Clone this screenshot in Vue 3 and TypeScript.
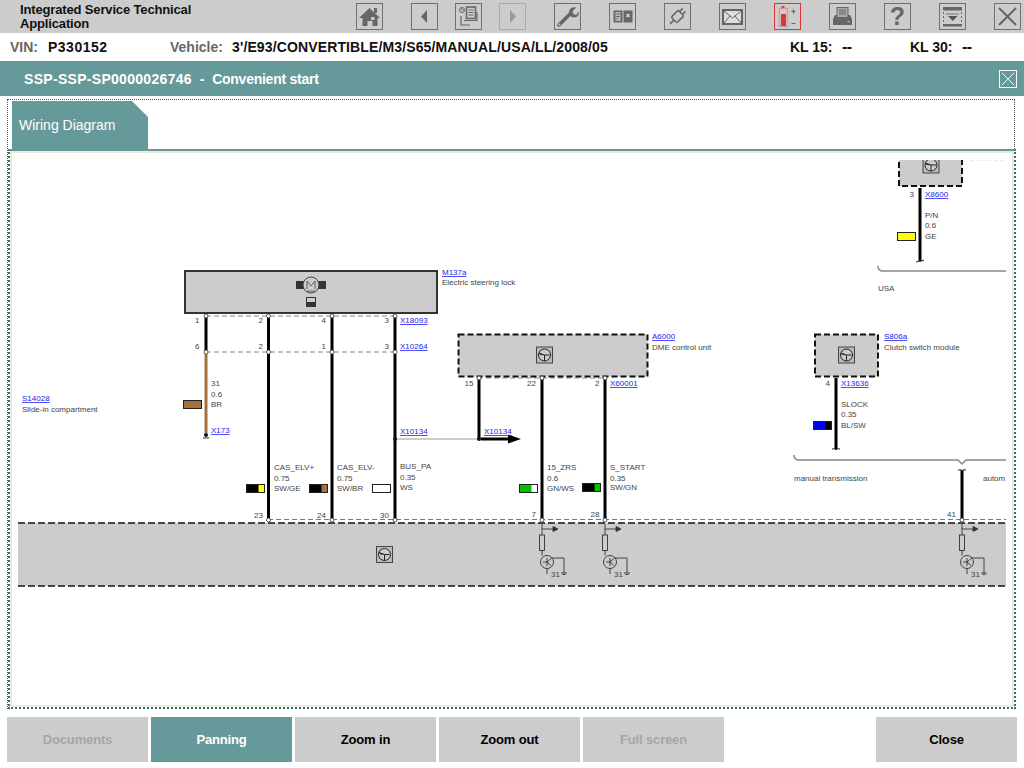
<template>
  <div class="page">
    <header class="toolbar">
      <div class="app-title">Integrated Service Technical<br />Application</div>
      <nav class="tools">
        <button class="tool">
          <svg viewBox="0 0 25 25"><path d="M12.5 4 23 14h-2.500v8h-5v-5h-5v5h-5v-8H2z" fill="#666" /><rect x="14" y="13" width="3.500" height="3" fill="#ccc" /><rect x="17" y="4" width="3" height="5" fill="#666" /></svg>
        </button>
        <button class="tool">
          <svg viewBox="0 0 25 25"><path d="M15 6 9 12.500l6 6.500z" fill="#666" /></svg>
        </button>
        <button class="tool tool-near">
          <svg viewBox="0 0 25 25" fill="none" stroke="#666"><circle cx="6" cy="6" r="2.500" /><path d="M5 3.500 6 6h2" stroke-width=".8" /><rect x="10.500" y="3" width="9" height="11.500" stroke-width="1.600" /><path d="M12.500 6h5M12.500 8.500h5M12.500 11h5" /><path d="M21 8v8.500H8M5 12v9h9" stroke-width="1.200" /></svg>
        </button>
        <button class="tool tool-near tool-off">
          <svg viewBox="0 0 25 25"><path d="M10 6l6 6.500L10 19z" fill="#999" /></svg>
        </button>
        <button class="tool">
          <svg viewBox="0 0 25 25"><path d="M4 21 15 10" stroke="#666" stroke-width="3.500" stroke-linecap="round" /><path d="M21 3.500 17.500 7.500l1 2.500 2.500 1 3-3.500c.5 3-1.500 6-5 6-1 0-2-.3-3-1L14 10c-.5-3 1-7.500 7-6.500z" fill="#666" /><circle cx="4.500" cy="20.500" r=".9" fill="#ccc" /></svg>
        </button>
        <button class="tool">
          <svg viewBox="0 0 25 25"><rect x="3.500" y="6.500" width="9" height="12" fill="#666" /><rect x="5.500" y="8" width="5" height="9" fill="#bbb" /><path d="M6.500 10h3M6.500 12.500h3M6.500 15h1.500" stroke="#555" /><rect x="13.500" y="6.500" width="9" height="12" fill="#666" /><path d="m16.500 10 3 3m0-3-3 3" stroke="#ddd" stroke-width="1.200" /></svg>
        </button>
        <button class="tool">
          <svg viewBox="0 0 25 25"><g transform="rotate(45 12.500 12.500)" fill="none" stroke="#666" stroke-width="1.600"><rect x="8.500" y="7.500" width="8" height="10" rx="1.500" /><path d="M10.500 7V3M14.500 7V3M12.500 18v5" /></g></svg>
        </button>
        <button class="tool">
          <svg viewBox="0 0 25 25" fill="none" stroke="#666"><rect x="3" y="6" width="19" height="14" stroke-width="2" fill="#ddd" /><path d="m4 7 8.500 7L21 7M4 19l6-7M21 19l-6-7" /></svg>
        </button>
        <button class="tool tool-red">
          <svg viewBox="0 0 25 25"><rect x="6.500" y="2" width="3" height="3" fill="#d33" /><rect x="4.500" y="4.500" width="8" height="18" fill="none" stroke="#d99" stroke-width="1.400" /><rect x="6" y="10" width="5" height="12" fill="#d33" /><path d="M16.500 7.500h4M18.500 5.500v4M16.500 19.500h4" stroke="#d33" stroke-width="1.200" /></svg>
        </button>
        <button class="tool">
          <svg viewBox="0 0 25 25"><rect x="7" y="3.500" width="11" height="10" fill="#aaa" stroke="#666" /><path d="M9 6h7M9 8h7M9 10h7" stroke="#666" /><path d="M7 11H5l-2 4v6h19v-6l-2-4h-2v3H7z" fill="#666" /><rect x="17.500" y="17" width="2" height="1" fill="#ccc" /></svg>
        </button>
        <button class="tool">
          <span class="help-mark">?</span>
        </button>
        <button class="tool">
          <svg viewBox="0 0 25 25"><rect x="3" y="3" width="19" height="3.500" fill="#666" /><rect x="3" y="20" width="19" height="2.500" fill="#666" /><path d="M8 12h9.500l-4.700 5z" fill="#555" /><path d="M3.500 8v11M21.500 8v11" stroke="#666" stroke-dasharray="2 2" /><path d="M6 10h13" stroke="#777" /></svg>
        </button>
        <button class="tool">
          <svg viewBox="0 0 25 25"><path d="m4 4 17 17M21 4 4 21" stroke="#666" stroke-width="2" /></svg>
        </button>
      </nav>
    </header>

    <section class="vehicle-row">
      <span class="cap vin-cap">VIN:</span>
      <span class="vin">P330152</span>
      <span class="cap vehicle-cap">Vehicle:</span>
      <span class="vehicle">3'/E93/CONVERTIBLE/M3/S65/MANUAL/USA/LL/2008/05</span>
      <span class="kl"><span>KL 15:</span><span class="kl-value">--</span></span>
      <span class="kl kl-last"><span>KL 30:</span><span class="kl-value">--</span></span>
    </section>

    <section class="doc-title">
      <span><span class="doc-code">SSP-SSP-SP0000026746</span>&nbsp; -&nbsp; <span class="doc-name">Convenient start</span></span>
      <button class="doc-close">
        <svg viewBox="0 0 16 16"><path d="m2 2 12 12M14 2 2 14" stroke="#fff" stroke-width=".9" /></svg>
      </button>
    </section>

    <main class="panel">
      <div class="tab">Wiring Diagram</div>
      <div class="frame">
        <svg class="diagram" viewBox="10 151 1004 556" width="1004" height="556">
          <defs>
            <clipPath id="sheet"><rect x="18" y="160" width="988" height="440" /></clipPath>
            <g id="ecu">
              <rect x="-8" y="-8" width="16" height="16" fill="#bbb" stroke="#444" />
              <circle r="6" fill="#ccc" stroke="#222" />
              <path d="M0 0v6M0 0-5.500-2M0 0l5 0M-5 -1l3 1" fill="none" stroke="#222" />
            </g>
            <g id="driver" fill="none" stroke="#333" stroke-width=".9">
              <path d="M0 2v13M0 7h12" />
              <path d="M11 4.500 16 7l-5 2.500z" fill="#333" />
              <rect x="-2.500" y="13" width="5" height="15.500" fill="#ccc" />
              <path d="M0 28.500v5" />
              <circle cx="5" cy="40" r="6.500" />
              <path d="M5 36v8M1 40h4l4-3.500M5 40l4 3.500M9 36h13v15M5 46v6M19 51h6M20.500 52.500h3" />
            </g>
          </defs>

          <g clip-path="url(#sheet)">
            <rect x="18" y="523" width="988" height="63" fill="#ccc" />
            <path d="M18 523h988M18 586h988" stroke="#111" stroke-width="1.600" stroke-dasharray="7 3" />
            <path d="M268 519.500h738" stroke="#777" stroke-dasharray="5 3" />
            <use href="#ecu" x="384.500" y="554.500" />

            <rect x="185" y="271" width="252" height="42" fill="#ccc" stroke="#333" stroke-width="2" />
            <rect x="296" y="281" width="30" height="8" fill="#333" />
            <circle cx="311" cy="285" r="8" fill="#ccc" stroke="#444" />
            <path d="M307 289v-8l4 5 4-5v8M307 291h8" fill="none" stroke="#444" stroke-width=".8" />
            <rect x="306" y="297" width="10" height="10" fill="#333" />
            <rect x="307" y="298" width="8" height="4" fill="#ccc" />

            <path d="M206 316h189M206 352h189M478 378h127" stroke="#888" stroke-dasharray="5 3" />

            <rect x="458.500" y="334.500" width="189" height="42" fill="#ccc" stroke="#111" stroke-width="2" stroke-dasharray="6 3" />
            <use href="#ecu" x="544.500" y="355" />
            <rect x="815" y="334.500" width="63" height="42" fill="#ccc" stroke="#111" stroke-width="2" stroke-dasharray="6 3" />
            <use href="#ecu" x="846.500" y="355" />
            <rect x="899" y="150" width="63" height="36" fill="#ccc" stroke="#111" stroke-width="2" stroke-dasharray="6 3" />
            <use href="#ecu" x="931" y="165" />
            <path d="M970 160h36" stroke="#ddd" stroke-dasharray="4 2" />

            <path d="M395 439h84" stroke="#999" stroke-width="1.200" />
            <path d="M481 439h29" stroke="#000" stroke-width="3" />
            <path d="M508 434.500 521 439l-13 4.500z" fill="#000" />

            <line
              v-for="wire in wires"
              :key="wire.x + '-' + wire.from"
              :x1="wire.x"
              :x2="wire.x"
              :y1="wire.from"
              :y2="wire.to"
              :stroke="wire.color ?? '#000'"
              stroke-width="3"
            />
            <circle
              v-for="pin in pins"
              :key="pin[0] + '-' + pin[1]"
              :cx="pin[0]"
              :cy="pin[1]"
              r="2"
              fill="#fff"
              stroke="#333"
              stroke-width=".8"
            />
            <circle cx="206" cy="435" r="2" fill="#111" />
            <circle cx="395" cy="439" r="2" fill="#111" />
            <circle cx="479" cy="439" r="2" fill="#111" />
            <path d="M203 438h6" stroke="#333" />

            <path d="M832 449q4-1 4 1 0-2 4-1M958 470q4-1 4 1 0-2 4-1M916 262q4-1 4-1 0 1 4-1" fill="none" stroke="#222" />
            <path d="M794 455q0 5 5 5h159l4 4 4-4h40M878 266q0 5 5 5h123" fill="none" stroke="#888" stroke-width="1.500" />

            <use href="#driver" x="542" y="522" />
            <use href="#driver" x="605" y="522" />
            <use href="#driver" x="962" y="522" />

            <g v-for="swatch in swatches" :key="swatch.x">
              <rect :x="swatch.x + 0.500" :y="swatch.y + 0.500" width="18" height="8" :fill="swatch.left" stroke="#222" />
              <rect v-if="swatch.right" :x="swatch.x + 12.500" :y="swatch.y + 1" width="5.500" height="7" :fill="swatch.right" />
            </g>

            <text
              v-for="label in labels"
              :key="label[0] + label[2] + label[1]"
              class="lbl"
              :x="label[0]"
              :y="label[1]"
              :text-anchor="label[3] ?? 'start'"
            >{{ label[2] }}</text>
            <text
              v-for="link in links"
              :key="link[0] + link[2]"
              class="lnk"
              :x="link[0]"
              :y="link[1]"
            >{{ link[2] }}</text>
          </g>
        </svg>
      </div>
    </main>

    <footer class="actions">
      <button class="action action-off">Documents</button>
      <button class="action action-on">Panning</button>
      <button class="action">Zoom in</button>
      <button class="action">Zoom out</button>
      <button class="action action-off">Full screen</button>
      <button class="action action-end">Close</button>
    </footer>
  </div>
</template>

<script setup lang="ts">
type Wire = { x: number; from: number; to: number; color?: string }
type Label = [number, number, string, string?]
type Link = [number, number, string]
type Swatch = { x: number; y: number; left: string; right?: string }

const wires: Wire[] = [
  { x: 206, from: 316, to: 352 },
  { x: 268.500, from: 316, to: 352 },
  { x: 332, from: 316, to: 352 },
  { x: 395, from: 316, to: 352 },
  { x: 206, from: 354, to: 433, color: '#a5703c' },
  { x: 268.500, from: 354, to: 520 },
  { x: 332, from: 354, to: 520 },
  { x: 395, from: 354, to: 520 },
  { x: 479, from: 378, to: 439 },
  { x: 542, from: 378, to: 520 },
  { x: 605, from: 378, to: 520 },
  { x: 836, from: 378, to: 449 },
  { x: 962, from: 470, to: 520 },
  { x: 920, from: 188, to: 261 },
]

const pins: [number, number][] = [
  [206, 316], [268.500, 316], [332, 316], [395, 316],
  [206, 352], [268.500, 352], [332, 352], [395, 352],
  [268.500, 520], [332, 520], [395, 520],
  [479, 378], [542, 378], [605, 378],
  [542, 520], [605, 520], [962, 520],
]

const labels: Label[] = [
  [442, 285, 'Electric steering lock'],
  [22, 412, 'Slide-in compartment'],
  [652, 349.500, 'DME control unit'],
  [884, 349.500, 'Clutch switch module'],
  [199.500, 323, '1', 'end'],
  [263, 323, '2', 'end'],
  [326, 323, '4', 'end'],
  [389, 323, '3', 'end'],
  [199.500, 349, '6', 'end'],
  [263, 349, '2', 'end'],
  [326, 349, '1', 'end'],
  [389, 349, '3', 'end'],
  [211, 386, '31'],
  [211, 397, '0.6'],
  [211, 407, 'BR'],
  [274, 470, 'CAS_ELV+'],
  [274, 481, '0.75'],
  [274, 491, 'SW/GE'],
  [337, 470, 'CAS_ELV-'],
  [337, 481, '0.75'],
  [337, 491, 'SW/BR'],
  [400, 469, 'BUS_PA'],
  [400, 480, '0.35'],
  [400, 490, 'WS'],
  [263, 518, '23', 'end'],
  [326, 518, '24', 'end'],
  [389, 518, '30', 'end'],
  [473.500, 386, '15', 'end'],
  [536, 386, '22', 'end'],
  [599.500, 386, '2', 'end'],
  [547, 470, '15_ZRS'],
  [547, 481, '0.6'],
  [547, 491, 'GN/WS'],
  [610, 470, 'S_START'],
  [610, 481, '0.35'],
  [610, 490, 'SW/GN'],
  [536, 517, '7', 'end'],
  [599.500, 517, '28', 'end'],
  [551, 577, '31'],
  [614, 577, '31'],
  [971, 577, '31'],
  [830, 386, '4', 'end'],
  [841, 407, 'SLOCK'],
  [841, 417, '0.35'],
  [841, 428, 'BL/SW'],
  [794, 481, 'manual transmission'],
  [983, 481, 'autom'],
  [956, 517, '41', 'end'],
  [914, 197, '3', 'end'],
  [925, 218, 'P/N'],
  [925, 228, '0.6'],
  [925, 239, 'GE'],
  [878, 291, 'USA'],
]

const links: Link[] = [
  [442, 275, 'M137a'],
  [22, 401, 'S14028'],
  [400, 323, 'X18093'],
  [400, 349, 'X10264'],
  [211, 433, 'X173'],
  [400, 434, 'X10134'],
  [484, 434, 'X10134'],
  [652, 339, 'A6000'],
  [610, 386, 'X60001'],
  [884, 339, 'S806a'],
  [841, 386, 'X13636'],
  [925, 197, 'X8600'],
]

const swatches: Swatch[] = [
  { x: 183, y: 400, left: '#a5703c' },
  { x: 246, y: 484, left: '#000', right: '#ffff00' },
  { x: 309, y: 484, left: '#000', right: '#a5703c' },
  { x: 372, y: 484, left: '#fff' },
  { x: 519, y: 484, left: '#00c000', right: '#fff' },
  { x: 582, y: 483, left: '#000', right: '#00c000' },
  { x: 813, y: 421, left: '#0000ff', right: '#000' },
  { x: 897, y: 232, left: '#ffff00' },
]
</script>

<style scoped>
.page {
  width: 1024px;
  height: 768px;
  overflow: hidden;
  background: #fff;
  font-family: "Liberation Sans", Arial, sans-serif;
}

.toolbar {
  display: flex;
  align-items: flex-start;
  height: 33px;
  background: #ccc;
}

.app-title {
  width: 336px;
  padding: 3px 0 0 20px;
  font-size: 13px;
  line-height: 14px;
  font-weight: bold;
  letter-spacing: -0.15px;
  color: #111;
}

.tools {
  display: flex;
  gap: 28px;
  padding-top: 3px;
}

button {
  font-family: inherit;
  padding: 0;
  border: none;
}

.tool {
  display: flex;
  align-items: center;
  justify-content: center;
  width: 27px;
  height: 27px;
  background: #ccc;
  border: 1px solid #707070;
}

.tool-near {
  margin-left: -11px;
}

.tool-off {
  border-color: #aaa;
}

.tool-red {
  border-color: #d33;
}

.tool svg {
  width: 25px;
  height: 25px;
}

.help-mark {
  font-size: 25px;
  line-height: 25px;
  font-weight: bold;
  color: #666;
}

.vehicle-row {
  display: flex;
  align-items: center;
  height: 28px;
  font-size: 14px;
  font-weight: bold;
  color: #111;
}

.vehicle-row > span {
  flex: none;
}

.cap {
  color: #666;
}

.vin-cap {
  width: 38px;
  margin-left: 10px;
}

.vin {
  width: 122px;
  letter-spacing: 0.5px;
}

.vehicle-cap {
  width: 62px;
}

.vehicle {
  width: 558px;
  letter-spacing: 0.13px;
}

.kl {
  display: flex;
  width: 120px;
}

.kl-last {
  width: 114px;
}

.kl span:first-child {
  width: 52px;
}

.kl-value {
  font-size: 16px;
  line-height: 16px;
  letter-spacing: -0.5px;
}

.doc-title {
  display: flex;
  align-items: center;
  justify-content: space-between;
  height: 35px;
  padding: 0 7px 0 24px;
  background: #669999;
  color: #fff;
  font-size: 14px;
  font-weight: bold;
}

.doc-code {
  letter-spacing: 0.3px;
}

.doc-name {
  letter-spacing: -0.25px;
}

.doc-close {
  width: 18px;
  height: 18px;
  background: transparent;
  border: 1px solid #fff;
}

.doc-close svg {
  display: block;
  width: 16px;
  height: 16px;
}

.panel {
  width: 1008px;
  height: 610px;
  margin: 3px 0 0 7px;
  padding-top: 1px;
  box-sizing: border-box;
  border: 1px dotted #555;
}

.tab {
  display: flex;
  align-items: center;
  width: 136px;
  height: 48px;
  margin-left: 4px;
  padding-left: 7px;
  box-sizing: border-box;
  background: #669999;
  color: #fff;
  font-size: 14px;
  clip-path: polygon(0 0, 120px 0, 100% 16px, 100% 100%, 0 100%);
}

.frame {
  width: 1008px;
  height: 560px;
  box-sizing: border-box;
  background: #fff;
  border: 2px dotted #2f7070;
  border-top: 2px solid #669999;
  box-shadow: inset 0 0 0 2px #eeeade;
}

.diagram {
  display: block;
}

.lbl {
  font-size: 8px;
  fill: #444;
}

.lnk {
  font-size: 8px;
  fill: #2222ee;
  text-decoration: underline;
}

.actions {
  display: flex;
  gap: 3px;
  margin-top: 8px;
  padding: 0 7px;
}

.action {
  width: 141px;
  height: 45px;
  background: #ccc;
  color: #000;
  font-size: 13px;
  font-weight: bold;
  letter-spacing: -0.15px;
}

.action-off {
  color: #a6a6a6;
}

.action-on {
  background: #669999;
  color: #fff;
}

.action-end {
  margin-left: auto;
}
</style>
